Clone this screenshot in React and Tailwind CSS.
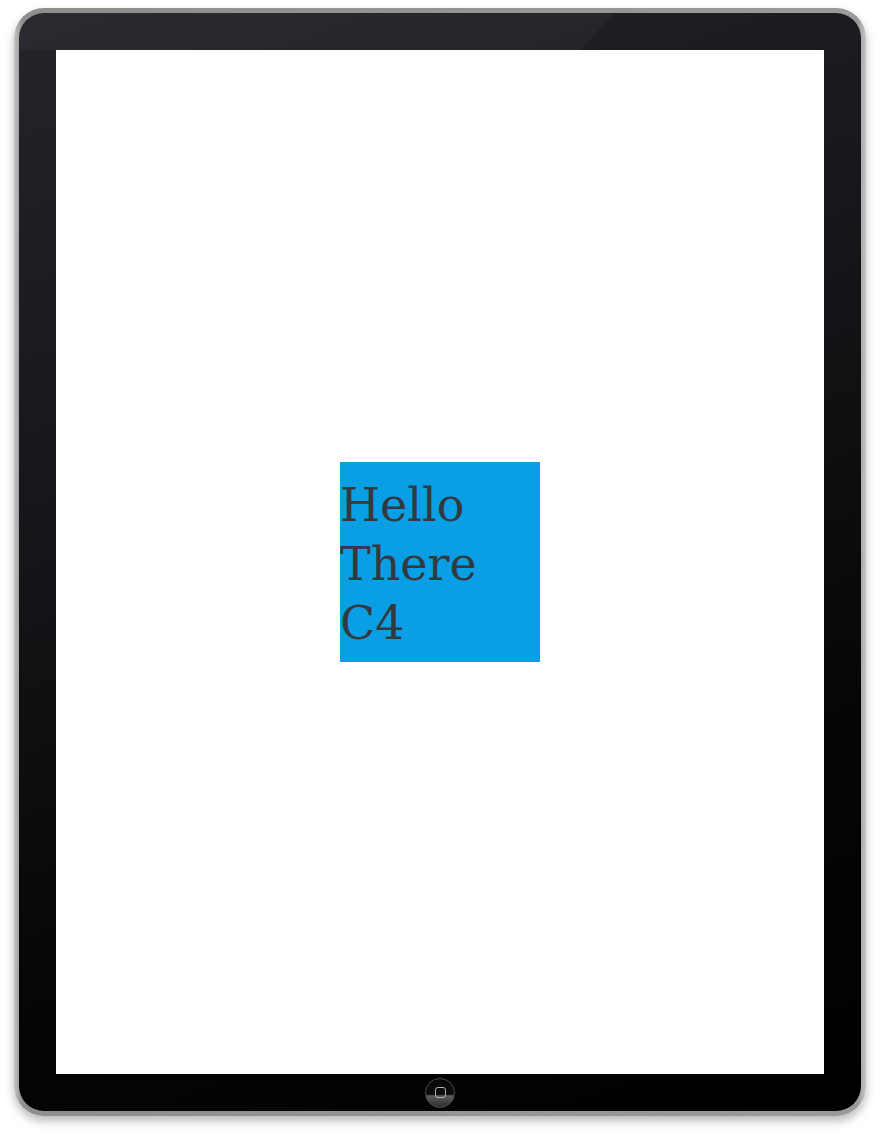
import React from 'react';

function HomeButton() {
    return (
        <div className="w-[30px] h-[30px] rounded-full bg-[linear-gradient(180deg,#060606_0%,#0e0e0f_55%,#5a5b5d_60%,#2e2e30_100%)] border border-[#4a4a4c] flex items-center justify-center">
            <div className="w-[11px] h-[11px] rounded-[3px] border-[1.5px] border-[#b4b4b4]" />
        </div>
    );
}

export default function App() {
    return (
        <div className="w-[880px] h-[1136px] bg-white pt-[8px] pl-[14px]">
            {/* Device frame */}
            <div className="w-[852px] h-[1108px] rounded-[30px] p-[5px] bg-[linear-gradient(90deg,#c4c4c4_0%,#8e8e8e_1%,#9a9a9a_99%,#c4c4c4_100%)] shadow-[0_5px_10px_rgba(0,0,0,0.28)]">
                <div className="relative w-full h-full rounded-[25px] overflow-hidden bg-[linear-gradient(160deg,#24252a_0%,#16171a_35%,#060607_70%,#000_100%)] flex flex-col items-center pt-[37px]">
                    {/* glare on top bezel */}
                    <div className="absolute left-0 top-0 w-full h-[37px] bg-[rgba(255,255,255,0.03)] [clip-path:polygon(0_0,596px_0,561px_37px,0_37px)]" />
                    {/* Screen */}
                    <div className="relative w-[768px] h-[1024px] bg-white flex items-center justify-center">
                        <div className="w-[200px] h-[200px] bg-[#0a9fe4] pt-[14px] text-[46px] leading-[59px] text-[#323a40] font-['DejaVu_Serif',serif]">
                            Hello<br />There<br />C4
                        </div>
                    </div>
                    <div className="flex-1 flex items-center justify-center">
                        <HomeButton />
                    </div>
                </div>
            </div>
        </div>
    );
}
